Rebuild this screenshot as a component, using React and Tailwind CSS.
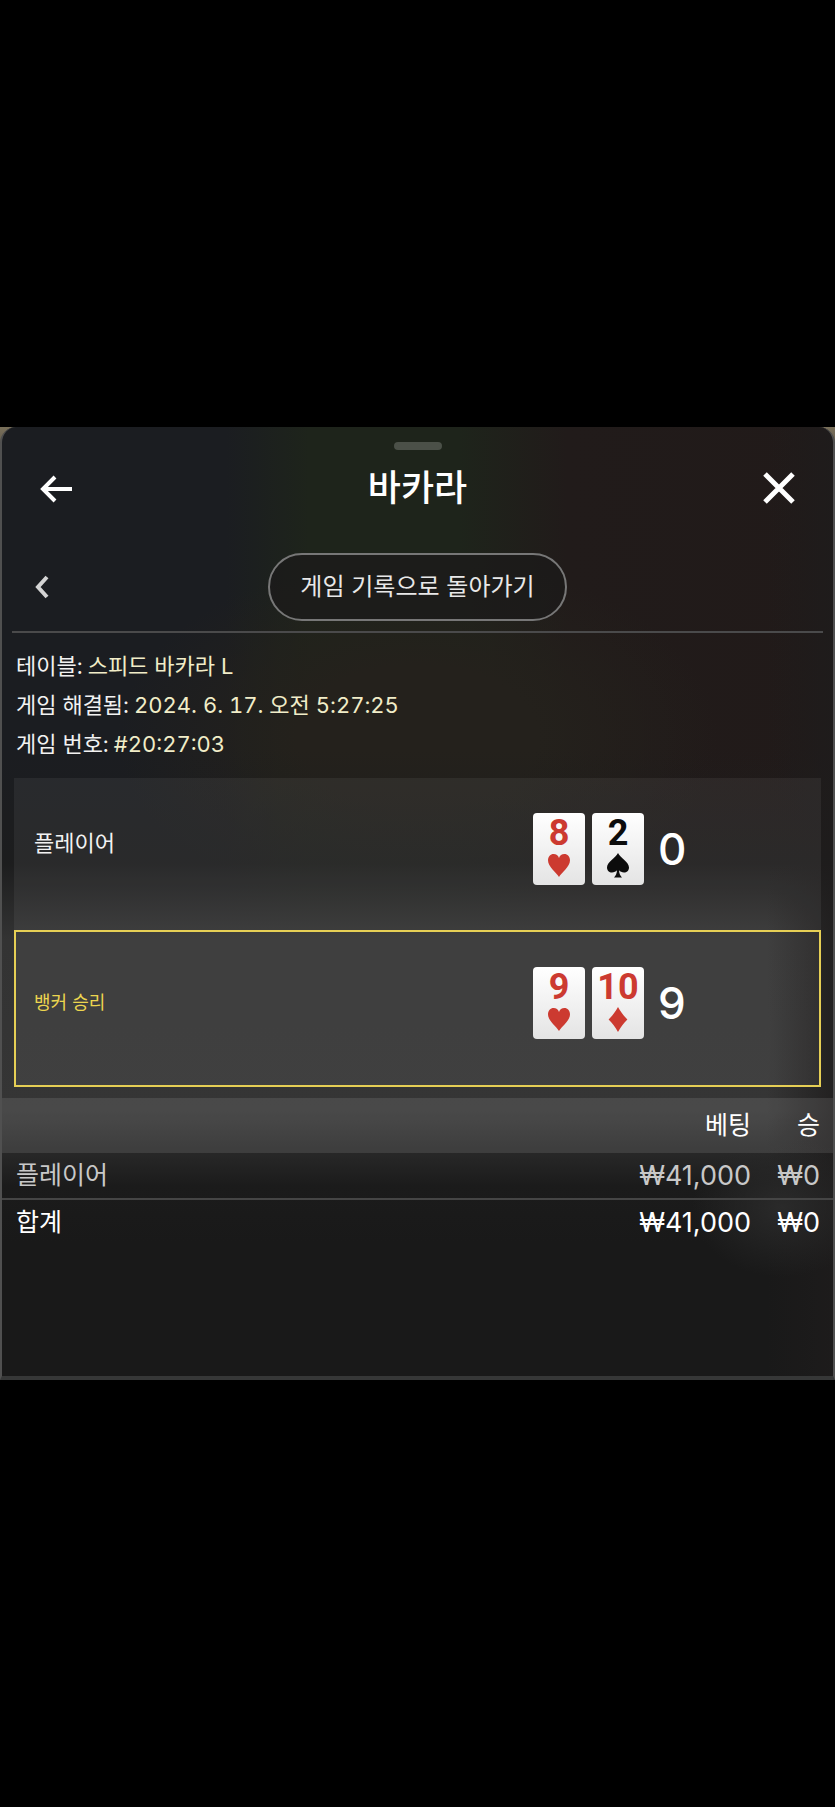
const suitPaths = {
  heart: 'M12 24C9.5 19.5 1 14 1 7.2C1 3.6 3.5 1 6.6 1C9.2 1 11.2 2.6 12 5C12.8 2.6 14.8 1 17.4 1C20.5 1 23 3.6 23 7.2C23 14 14.5 19.5 12 24Z',
  spade: 'M12 0C14.2 4.6 23 9 23 14.4C23 17.4 20.8 19.4 18 19.4C15.9 19.4 14.2 18.6 13 17.2C13.2 20.4 14.2 22.6 16 24.6H8C9.8 22.6 10.8 20.4 11 17.2C9.8 18.6 8.1 19.4 6 19.4C3.2 19.4 1 17.4 1 14.4C1 9 9.8 4.6 12 0Z',
  diamond: 'M12 0C14.6 4.6 17.8 9 21.4 12.5C17.8 16 14.6 20.4 12 25C9.4 20.4 6.2 16 2.6 12.5C6.2 9 9.4 4.6 12 0Z',
};

const hands = [
  {
    label: '플레이어',
    score: 0,
    winner: false,
    cards: [
      { rank: '8', suit: 'heart' },
      { rank: '2', suit: 'spade' },
    ],
  },
  {
    label: '뱅커 승리',
    score: 9,
    winner: true,
    cards: [
      { rank: '9', suit: 'heart' },
      { rank: '10', suit: 'diamond' },
    ],
  },
];

const details = [
  { label: '테이블:', value: '스피드 바카라 L' },
  { label: '게임 해결됨:', value: '2024. 6. 17. 오전 5:27:25' },
  { label: '게임 번호:', value: '#20:27:03' },
];

function Card({ rank, suit }) {
  return (
    <div
      className={`flex h-[72px] w-[52px] flex-col items-center rounded-[4px] bg-linear-to-b from-white to-[#e4e4e4] pt-1 ${
        suit === 'spade' ? 'text-[#0c0c0c]' : 'text-[#cc3a30]'
      }`}
    >
      <span className="font-['Roboto',sans-serif] text-[36px] leading-8 font-bold">{rank}</span>
      <svg viewBox="0 0 24 25" className="mt-1 h-[25px] w-6" fill="currentColor" aria-hidden="true">
        <path d={suitPaths[suit]} />
      </svg>
    </div>
  );
}

function HandRow({ hand }) {
  return (
    <div
      className={`flex items-start border-2 bg-white/6 pl-[18px] ${
        hand.winner ? 'border-[#e6cf55] pt-[35px] pb-[46px]' : 'border-transparent pt-[33px] pb-[43px]'
      }`}
    >
      <div
        className={`flex-1 ${
          hand.winner ? 'text-[18px] leading-[72px] text-[#ecd54f]' : 'text-[22px] leading-[60px] text-[#f2f2f2]'
        }`}
      >
        {hand.label}
      </div>
      <div className="flex w-[286px] items-center">
        <div className="flex gap-[7px]">
          {hand.cards.map((card) => (
            <Card key={card.rank} rank={card.rank} suit={card.suit} />
          ))}
        </div>
        <span className="ml-[14px] text-[44px] leading-[72px] font-medium">{hand.score}</span>
      </div>
    </div>
  );
}

export default function App() {
  return (
    <div className="flex min-h-screen items-center bg-black font-['Inter','Noto_Sans_CJK_KR',sans-serif] text-white">
      <div className="w-full bg-linear-to-b from-[#7a705a] from-0% to-[#3a3a3a] to-5%">
        <main className="w-full rounded-t-[16px] border-x-2 border-b-4 border-x-[#505050] border-b-[#363737] bg-[#1a1a1a] bg-[radial-gradient(ellipse_90px_70px_at_780px_780px,#2a2a2a,transparent),linear-gradient(to_left,#1e1c1ccc,transparent_8%),linear-gradient(to_bottom,transparent_34%,#1d1d1dcc_46%,#333333_54%,#353535_72%,#262626_77%,#1b1b1b_80%,#191919_86%),radial-gradient(ellipse_300px_180px_at_50%_310px,#24211c,#24211c_40%,transparent),linear-gradient(to_right,#1b1d21_27%,#1e241b_37%,#1e241b_55%,#211b1a_68%,#211a19)] pb-[131px]">
          <div className="flex justify-center pt-[15px]">
            <div className="h-2 w-12 rounded-full bg-[#4b5048]" />
          </div>

          <header className="flex h-[75px] items-center justify-between px-9">
            <button type="button" aria-label="뒤로" className="w-9">
              <svg viewBox="0 0 36 36" className="size-9" fill="none" stroke="currentColor" strokeWidth="4" aria-hidden="true">
                <path d="M17 7L5 19L17 31M5 19H34" />
              </svg>
            </button>
            <h1 className="text-[36px] leading-[48px] font-medium">바카라</h1>
            <button type="button" aria-label="닫기" className="w-9">
              <svg viewBox="0 0 36 36" className="size-9" fill="none" stroke="currentColor" strokeWidth="5" aria-hidden="true">
                <path d="M4 4L32 32M32 4L4 32" />
              </svg>
            </button>
          </header>

          <nav className="mx-[10px] grid grid-cols-[1fr_auto_1fr] items-center border-b-2 border-[#4a4a4b] pt-7 pb-[10px]">
            <button type="button" aria-label="이전" className="w-10 pl-[22px] text-[#d4d4d4]">
              <svg viewBox="0 0 16 24" className="h-6 w-4" fill="none" stroke="currentColor" strokeWidth="4" aria-hidden="true">
                <path d="M13 2L4 12L13 22" />
              </svg>
            </button>
            <button
              type="button"
              className="h-[68px] rounded-full border-2 border-[#777777] bg-[#1b1a19]/70 px-[30px] text-[24px] leading-8 text-[#e8e8e8]"
            >
              게임 기록으로 돌아가기
            </button>
          </nav>

          <dl className="px-[14px] pt-[14px] pb-[14px] text-[22px] leading-[39px] tabular-nums">
            {details.map((item) => (
              <div key={item.label} className="flex gap-[5px]">
                <dt className="text-[#f2f2f2]">{item.label}</dt>
                <dd className="text-[#f1edc8]">{item.value}</dd>
              </div>
            ))}
          </dl>

          <section className="mx-3 mb-[11px]">
            {hands.map((hand) => (
              <HandRow key={hand.label} hand={hand} />
            ))}
          </section>

          <table className="w-full text-right text-[27px] leading-[45px]">
            <thead>
              <tr className="h-[55px] bg-white/10 text-[25px]">
                <th aria-label="베팅 종류" />
                <th className="w-[150px] font-normal">베팅</th>
                <th className="w-[82px] pr-[13px] font-normal">승</th>
              </tr>
            </thead>
            <tbody>
              <tr className="border-b-2 border-[#454545] text-[#c8c8c8]">
                <th className="pl-[14px] text-left text-[25px] font-normal">플레이어</th>
                <td>₩41,000</td>
                <td className="pr-[13px]">₩0</td>
              </tr>
              <tr>
                <th className="pl-[14px] text-left text-[25px] font-normal">합계</th>
                <td>₩41,000</td>
                <td className="pr-[13px]">₩0</td>
              </tr>
            </tbody>
          </table>
        </main>
      </div>
    </div>
  );
}
